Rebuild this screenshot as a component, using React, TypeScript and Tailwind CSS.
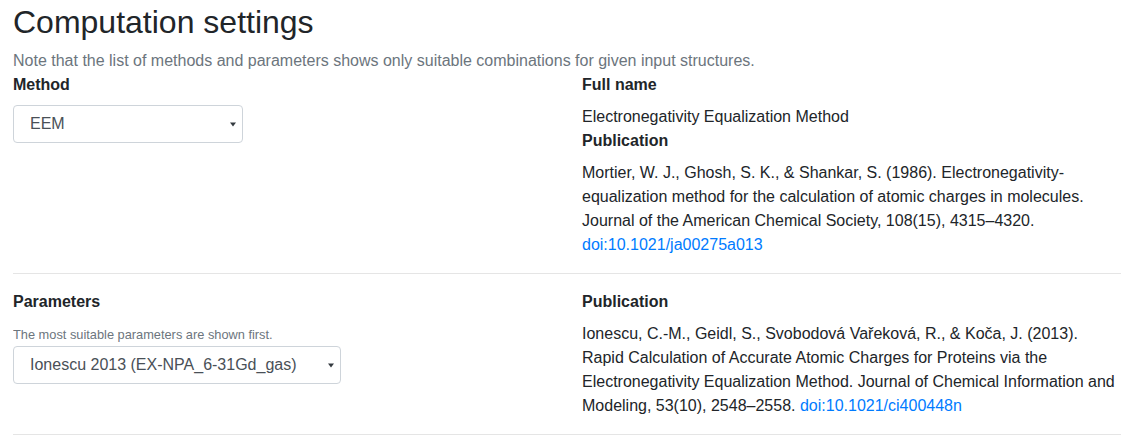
// Computation settings panel: method + parameter pickers with their publications

function FakeSelect({ value, width }: { value: string; width: string }) {
  return (
    <div
      className={`flex h-[38px] ${width} items-center justify-between rounded border border-[#ced4da] bg-white pl-4 pr-[6px] text-[#495057]`}
    >
      <span>{value}</span>
      {/* caret */}
      <svg width="6" height="5" viewBox="0 0 6 5" className="mt-px">
        <path d="M0 0.5h6L3 4.5z" fill="#343a40" />
      </svg>
    </div>
  )
}

function Label({ children }: { children: React.ReactNode }) {
  return <div className="mb-2 font-bold">{children}</div>
}

export default function App() {
  return (
    <div className="min-h-screen bg-white pt-[3px] pl-[13px] pr-[8px] font-['Liberation_Sans',Arial,sans-serif] text-[16px] leading-6 text-[#212529]">
      <h2 className="mb-2 text-[32px] leading-[1.2] font-normal">Computation settings</h2>
      <p className="text-[#6c757d]">
        Note that the list of methods and parameters shows only suitable combinations for given
        input structures.
      </p>

      {/* Method */}
      <div className="grid grid-cols-2 gap-x-[30px]">
        <div>
          <Label>Method</Label>
          <FakeSelect value="EEM" width="w-[230px]" />
        </div>
        <div>
          <Label>Full name</Label>
          <div>Electronegativity Equalization Method</div>
          <Label>Publication</Label>
          <p className="mb-4">
            Mortier, W. J., Ghosh, S. K., &amp; Shankar, S. (1986). Electronegativity-equalization
            method for the calculation of atomic charges in molecules. Journal of the American
            Chemical Society, 108(15), 4315–4320.{' '}
            <a href="#" className="text-[#007bff]">
              doi:10.1021/ja00275a013
            </a>
          </p>
        </div>
      </div>

      <hr className="mb-4 border-black/10" />

      {/* Parameters */}
      <div className="grid grid-cols-2 gap-x-[30px]">
        <div>
          <Label>Parameters</Label>
          <div className="h-6 overflow-hidden">
            <small className="text-[12.8px] leading-none text-[#6c757d]">
              The most suitable parameters are shown first.
            </small>
          </div>
          <FakeSelect value="Ionescu 2013 (EX-NPA_6-31Gd_gas)" width="w-[328px]" />
        </div>
        <div>
          <Label>Publication</Label>
          <p className="mb-4">
            Ionescu, C.-M., Geidl, S., Svobodová Vařeková, R., &amp; Koča, J. (2013). Rapid
            Calculation of Accurate Atomic Charges for Proteins via the Electronegativity
            Equalization Method. Journal of Chemical Information and Modeling, 53(10), 2548–2558.{' '}
            <a href="#" className="text-[#007bff]">
              doi:10.1021/ci400448n
            </a>
          </p>
        </div>
      </div>

      <hr className="border-black/10" />
    </div>
  )
}
